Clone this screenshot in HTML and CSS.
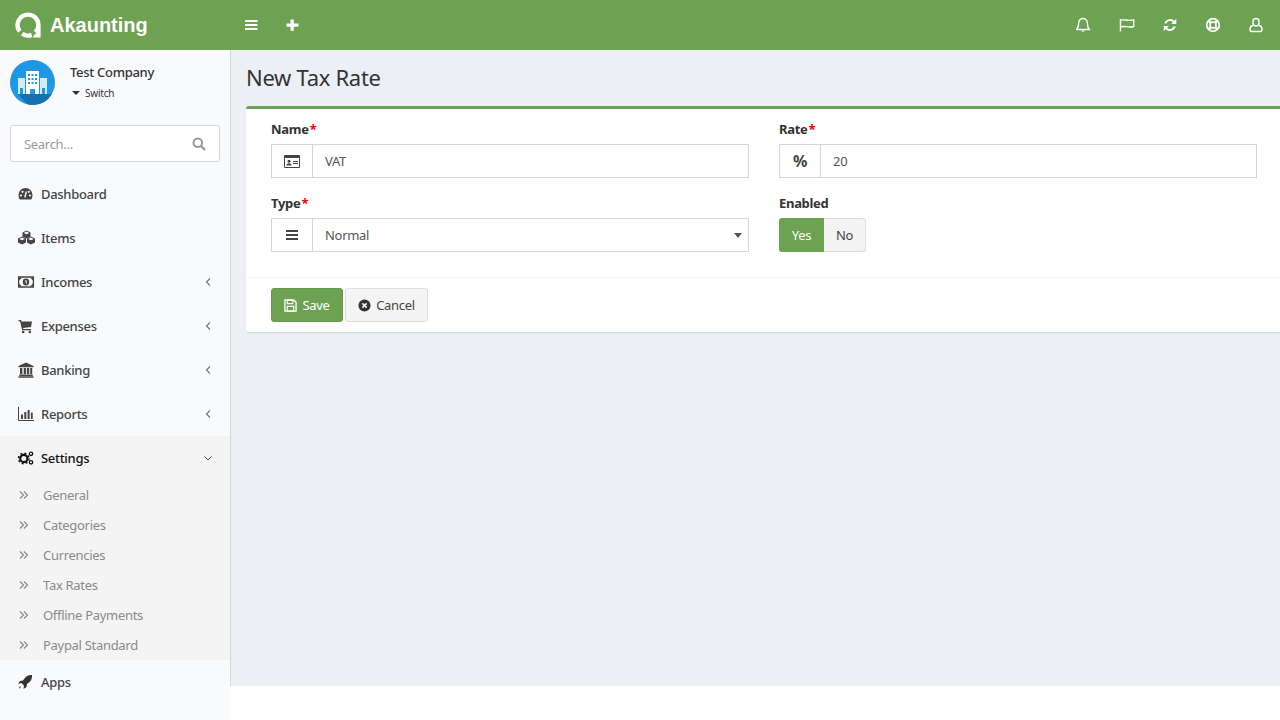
FILE: index.html
```html
<!DOCTYPE html>
<html lang="en">
<head>
    <meta charset="UTF-8">
    <meta name="viewport" content="width=device-width, initial-scale=1.0">
    <title>New Tax Rate</title>
    <link rel="stylesheet" href="styles.css">
</head>
<body>
    <header class="topbar">
        <a class="logo">
            <svg class="logo-mark" viewBox="0 0 26 26" width="26" height="26">
                <path d="M4.700 19.300A10.400 10.400 0 0 1 13 2.600 10.400 10.400 0 0 1 23.400 13a10.400 10.400 0 0 1-3 7.300" fill="none" stroke="#fff" stroke-width="4.400"/>
                <path d="M7.200 21.800a10.400 10.400 0 0 0 9.500 1.100" fill="none" stroke="#fff" stroke-width="4.400"/>
                <path d="M25.600 14V25.500H18l1-2.500 3.200-2.500 1.800-3.500z" fill="#fff"/>
            </svg>
            <span class="logo-text">Akaunting</span>
        </a>
        <div class="topbar-left">
            <svg class="top-icon" viewBox="0 0 14 14" width="14" height="14"><path d="M1 2h12.500v2H1zM1 6h12.500v2H1zM1 10h12.500v2H1z" fill="#fff"/></svg>
            <svg class="top-icon" viewBox="0 0 14 14" width="14" height="14"><path d="M5.500 1.500h3.300V5.500H13.500V8.800H8.800V12.800H5.500V8.800H1.500V5.500H5.500z" fill="#fff"/></svg>
        </div>
        <div class="topbar-right">
            <svg class="top-icon" viewBox="1 0 16 16" width="16" height="16"><path d="M8 1.500a4.300 4.300 0 0 1 4.300 4.300c0 4 .9 5.200 2 6.700H1.700c1.100-1.500 2-2.700 2-6.700A4.300 4.300 0 0 1 8 1.500z" fill="none" stroke="#fff" stroke-width="1.400"/><path d="M6.300 13.500a1.800 1.800 0 0 0 3.400 0z" fill="#fff"/></svg>
            <svg class="top-icon" viewBox="0 0 16 16" width="16" height="16"><path d="M1.500 2V14.500" stroke="#fff" stroke-width="1.500" fill="none"/><path d="M2 3.200c3.500-1.500 6 1.300 12.800-.4v6.700c-6 1.700-9-1.100-12.800.4" fill="none" stroke="#fff" stroke-width="1.300"/></svg>
            <svg class="top-icon" viewBox="0 0 16 16" width="16" height="16"><path d="M2.300 6.500A6 6 0 0 1 12.400 3.700L14.300 1.800V7H9.100l1.900-1.900A4 4 0 0 0 4.500 6.500zM13.700 9.500A6 6 0 0 1 3.600 12.300L1.700 14.200V9h5.200L5 10.900a4 4 0 0 0 6.500-1.400z" fill="#fff"/></svg>
            <svg class="top-icon" viewBox="0 0 16 16" width="16" height="16"><circle cx="8" cy="8" r="6.300" fill="none" stroke="#fff" stroke-width="1.700"/><circle cx="8" cy="8" r="3" fill="none" stroke="#fff" stroke-width="1.500"/><path d="M3.500 3.500l2.500 2.500M12.500 3.500L10 6M3.500 12.500L6 10M12.500 12.500L10 10" stroke="#fff" stroke-width="2.600"/></svg>
            <svg class="top-icon" viewBox="0 0 16 16" width="16" height="16"><path d="M8 1.500a3 3 0 0 1 3 3v1.500a3 3 0 0 1-6 0V4.500a3 3 0 0 1 3-3z" fill="none" stroke="#fff" stroke-width="1.400"/><path d="M5 8.500c-2 .3-3 1.500-3 3.500v1a1.500 1.500 0 0 0 1.500 1.500h9A1.500 1.500 0 0 0 14 13v-1c0-2-1-3.200-3-3.500" fill="none" stroke="#fff" stroke-width="1.400"/></svg>
        </div>
    </header>

    <div class="wrapper">
        <aside class="sidebar">
            <div class="company">
                <svg class="company-pic" viewBox="0 0 45 45" width="45" height="45">
                    <circle cx="22.500" cy="22.500" r="22.500" fill="#1e98e4"/>
                    <path d="M8 34h29l5 0A22.500 22.500 0 0 1 22.500 45 22.500 22.500 0 0 1 17 44z" fill="#1571b2"/>
                    <path d="M8 18h7v16H8zM30 18h7v16h-7z" fill="#d5e9f6"/>
                    <path d="M16 11h13v23H16z" fill="#fff"/>
                    <path d="M18 14h2v2h-2zM21.500 14h2v2h-2zM25 14h2v2h-2zM18 18h2v2h-2zM21.500 18h2v2h-2zM25 18h2v2h-2zM18 22h2v2h-2zM21.500 22h2v2h-2zM25 22h2v2h-2zM20 29h5v5h-5zM10 28h3v6h-3zM32 28h3v6h-3z" fill="#1e98e4"/>
                </svg>
                <div class="company-info">
                    <div class="company-name">Test Company</div>
                    <div class="company-switch"><i class="caret"></i>Switch</div>
                </div>
            </div>
            <div class="search">
                <span>Search...</span>
                <svg viewBox="0 0 14 14" width="14" height="14"><circle cx="5.800" cy="5.800" r="4.300" fill="none" stroke="#999" stroke-width="2"/><path d="M9 9l4 4" stroke="#999" stroke-width="2.400"/></svg>
            </div>
            <nav class="menu">
                <a class="menu-item">
                    <svg viewBox="0 0 16 16" width="16" height="16"><path d="M7.500 2A7 7 0 0 0 .5 9c0 1.800.5 3.300 1.300 4.600h11.400c.8-1.300 1.300-2.800 1.300-4.600a7 7 0 0 0-7-7z" fill="#444"/><path d="M6.800 11.500l1.600-6" stroke="#f9fafc" stroke-width="1.400"/><circle cx="3" cy="9.500" r="1.100" fill="#f9fafc"/><circle cx="4.500" cy="5.800" r="1.100" fill="#f9fafc"/><circle cx="12" cy="9.500" r="1.100" fill="#f9fafc"/><circle cx="10.800" cy="5.800" r="1.100" fill="#f9fafc"/></svg>
                    <span>Dashboard</span>
                </a>
                <a class="menu-item">
                    <svg class="wide-icon" viewBox="0 0 16 16" width="16" height="16">
                        <path d="M8.500.5l4 2v4l-4 2-4-2v-4zM4 6.500l4 2v4l-4 2-4-2v-4zM13 6.500l4 2v4l-4 2-4-2v-4z" fill="#444"/>
                        <path d="M8.500 1.500l2.800 1.400-2.800 1.400-2.800-1.400zM4 7.500l2.800 1.400L4 10.300 1.200 8.900zM13 7.500l2.800 1.400-2.800 1.400-2.800-1.400z" fill="#f9fafc"/>
                    </svg>
                    <span>Items</span>
                </a>
                <a class="menu-item">
                    <svg class="wide-icon" viewBox="0 0 16 16" width="16" height="16"><path d="M.6 3h14.800v10H.6z" fill="none" stroke="#444" stroke-width="1.300"/><ellipse cx="8" cy="8" rx="3.200" ry="3.400" fill="#444"/><path d="M1 3.500h3L1 6.500zM15 3.500h-3l3 3zM1 12.500h3l-3-3zM15 12.500h-3l3-3z" fill="#444"/><path d="M7 6.800h1.300v2.800" stroke="#f9fafc" fill="none"/></svg>
                    <span>Incomes</span>
                    <svg class="chev" viewBox="0 0 8 10" width="8" height="10"><path d="M6 1.500L2.500 5 6 8.500" fill="none" stroke="#777" stroke-width="1.200"/></svg>
                </a>
                <a class="menu-item">
                    <svg viewBox="0 0 16 16" width="16" height="16"><path d="M.5 2h2.600l.4 1.500H14l-1 5.500-8 1 .3 1h7.700v1.300H4.200L2 3.300H.5z" fill="#444"/><circle cx="5.200" cy="14" r="1.300" fill="#444"/><circle cx="11.800" cy="14" r="1.300" fill="#444"/></svg>
                    <span>Expenses</span>
                    <svg class="chev" viewBox="0 0 8 10" width="8" height="10"><path d="M6 1.500L2.500 5 6 8.500" fill="none" stroke="#777" stroke-width="1.200"/></svg>
                </a>
                <a class="menu-item">
                    <svg viewBox="0 0 16 16" width="16" height="16"><path d="M8 .5L15.500 4v1.300H.5V4zM2 6h2.300v6H2zM5.700 6H8v6H5.700zM8.900 6h2.300v6H8.900zM12.200 6h2v6h-2zM1.300 12.500h13.400V14H1.300zM.5 14.300h15v1.400H.5z" fill="#444"/></svg>
                    <span>Banking</span>
                    <svg class="chev" viewBox="0 0 8 10" width="8" height="10"><path d="M6 1.500L2.500 5 6 8.500" fill="none" stroke="#777" stroke-width="1.200"/></svg>
                </a>
                <a class="menu-item">
                    <svg class="wide-icon" viewBox="0 0 16 16" width="16" height="16"><path d="M.5 1v13.500H16" fill="none" stroke="#444" stroke-width="1"/><path d="M3 8.500h2V13H3zM6.300 6h2v7h-2zM9.600 4h2v9h-2zM12.900 6.500h1.800V13h-1.800z" fill="#444"/></svg>
                    <span>Reports</span>
                    <svg class="chev" viewBox="0 0 8 10" width="8" height="10"><path d="M6 1.500L2.500 5 6 8.500" fill="none" stroke="#777" stroke-width="1.200"/></svg>
                </a>
                <div class="menu-group">
                    <a class="menu-item active">
                        <svg class="wide-icon" viewBox="0 0 16 16" width="16" height="16"><circle cx="5.800" cy="8.500" r="3.600" fill="none" stroke="#111" stroke-width="2.200"/><circle cx="5.800" cy="8.500" r="5.300" fill="none" stroke="#111" stroke-width="1.400" stroke-dasharray="2 2.160"/><circle cx="13" cy="3.800" r="1.700" fill="none" stroke="#111" stroke-width="1.300"/><circle cx="13" cy="12.300" r="1.700" fill="none" stroke="#111" stroke-width="1.300"/></svg>
                        <span>Settings</span>
                        <svg class="chev" viewBox="0 0 10 8" width="10" height="8"><path d="M2.500 2.500L6 6l3.500-3.500" fill="none" stroke="#555" stroke-width="1"/></svg>
                    </a>
                    <a class="sub-item"><svg viewBox="0 0 10 10" width="10" height="10"><path d="M1 1.500L4.500 5 1 8.500M5 1.500L8.500 5 5 8.500" fill="none" stroke="#8a8a8a" stroke-width="1.200"/></svg><span>General</span></a>
                    <a class="sub-item"><svg viewBox="0 0 10 10" width="10" height="10"><path d="M1 1.500L4.500 5 1 8.500M5 1.500L8.500 5 5 8.500" fill="none" stroke="#8a8a8a" stroke-width="1.200"/></svg><span>Categories</span></a>
                    <a class="sub-item"><svg viewBox="0 0 10 10" width="10" height="10"><path d="M1 1.500L4.500 5 1 8.500M5 1.500L8.500 5 5 8.500" fill="none" stroke="#8a8a8a" stroke-width="1.200"/></svg><span>Currencies</span></a>
                    <a class="sub-item"><svg viewBox="0 0 10 10" width="10" height="10"><path d="M1 1.500L4.500 5 1 8.500M5 1.500L8.500 5 5 8.500" fill="none" stroke="#8a8a8a" stroke-width="1.200"/></svg><span>Tax Rates</span></a>
                    <a class="sub-item"><svg viewBox="0 0 10 10" width="10" height="10"><path d="M1 1.500L4.500 5 1 8.500M5 1.500L8.500 5 5 8.500" fill="none" stroke="#8a8a8a" stroke-width="1.200"/></svg><span>Offline Payments</span></a>
                    <a class="sub-item"><svg viewBox="0 0 10 10" width="10" height="10"><path d="M1 1.500L4.500 5 1 8.500M5 1.500L8.500 5 5 8.500" fill="none" stroke="#8a8a8a" stroke-width="1.200"/></svg><span>Paypal Standard</span></a>
                </div>
                <a class="menu-item">
                    <svg viewBox="1 0 16 16" width="16" height="16"><path d="M15 1c.3 3.500-1 6.500-5 9l-.5 3-3 2 .5-3.500-2.500-2.500L1 10l2-3 3-.5C8.500 2.500 11.500.700 15 1zM3.500 12.500c-1 .3-1.500 1-1.700 2 1-.2 1.700-.7 2-1.700z" fill="#333"/></svg>
                    <span>Apps</span>
                </a>
            </nav>
        </aside>

        <main class="content">
            <h1 class="page-title">New Tax Rate</h1>
            <section class="box">
                <div class="form-grid">
                    <div class="field">
                        <label>Name <em>*</em></label>
                        <div class="input-group">
                            <span class="addon"><svg viewBox="0 0 16 13" width="16" height="13"><path d="M.5.500h15v12H.5z" fill="none" stroke="#444"/><path d="M1 1h14v2H1z" fill="#444"/><circle cx="5" cy="6.300" r="1.500" fill="#444"/><path d="M2.500 10.500c0-3 5-3 5 0zM9 6h5v1H9zM9 8h5v1H9z" fill="#444"/></svg></span>
                            <span class="value">VAT</span>
                        </div>
                    </div>
                    <div class="field">
                        <label>Rate <em>*</em></label>
                        <div class="input-group">
                            <span class="addon addon-text">%</span>
                            <span class="value">20</span>
                        </div>
                    </div>
                    <div class="field">
                        <label>Type <em>*</em></label>
                        <div class="input-group">
                            <span class="addon"><svg viewBox="0 0 12 12" width="12" height="12"><path d="M0 1h12v2H0zM0 5h12v2H0zM0 9h12v2H0z" fill="#444"/></svg></span>
                            <span class="value select-value">Normal</span>
                            <i class="select-arrow"></i>
                        </div>
                    </div>
                    <div class="field">
                        <label>Enabled</label>
                        <div class="toggle">
                            <span class="toggle-yes">Yes</span>
                            <span class="toggle-no">No</span>
                        </div>
                    </div>
                </div>
                <div class="box-footer">
                    <button class="btn btn-save">
                        <svg viewBox="0 0 14 14" width="13" height="13"><path d="M1 1h9.500L13 3.500V13H1z" fill="none" stroke="#fff" stroke-width="1.400"/><path d="M3.500 1.500h6v3.500h-6zM3.500 8h7v5h-7z" fill="none" stroke="#fff" stroke-width="1.200"/></svg>
                        Save
                    </button>
                    <button class="btn btn-cancel">
                        <svg viewBox="0 0 14 14" width="13" height="13"><circle cx="7" cy="7" r="6.500" fill="#333"/><path d="M4.700 4.700l4.600 4.600M9.300 4.700l-4.600 4.600" stroke="#f4f4f4" stroke-width="1.800"/></svg>
                        Cancel
                    </button>
                </div>
            </section>
        </main>
    </div>
</body>
</html>
```

FILE: styles.css
```css
* {
    box-sizing: border-box;
}
html, body {
    height: 720px;
    overflow: hidden;
}
body {
    margin: 0;
    background: #fff;
    color: #333;
    font-family: "Noto Sans", "Open Sans", sans-serif;
    font-size: 13px;
    letter-spacing: -.3px;
}

/* top bar */
.topbar {
    display: flex;
    align-items: center;
    height: 50px;
    background: #6da252;
    color: #fff;
}
.logo {
    display: flex;
    align-items: center;
    width: 230px;
    padding-left: 15px;
}
.logo-mark {
    margin-right: 9px;
}
.logo-text {
    font-family: "Liberation Sans", sans-serif;
    font-size: 20px;
    font-weight: 700;
    letter-spacing: 0;
}
.topbar-left {
    display: flex;
    align-items: center;
    gap: 27px;
    padding-left: 14px;
}
.topbar-right {
    display: flex;
    align-items: center;
    gap: 27px;
    margin-left: auto;
    padding-right: 16px;
}

/* sidebar */
.wrapper {
    display: flex;
    height: 670px;
}
.sidebar {
    flex: none;
    width: 230px;
    background: #f9fafc;
}
.company {
    display: flex;
    padding: 10px;
    height: 75px;
}
.company-info {
    padding: 3px 0 0 15px;
}
.company-name {
    font-size: 13px;
    font-weight: 500;
    line-height: 18px;
}
.company-switch {
    display: flex;
    align-items: center;
    margin-top: 5px;
    font-size: 10px;
    line-height: 14px;
    letter-spacing: -.2px;
}
.caret {
    width: 0;
    height: 0;
    margin: 0 5px 0 2px;
    border-top: 4px solid #333;
    border-left: 4px solid transparent;
    border-right: 4px solid transparent;
}
.search {
    display: flex;
    align-items: center;
    justify-content: space-between;
    height: 37px;
    margin: 0 10px 10px;
    padding: 0 13px;
    background: #fff;
    border: 1px solid #d2d6de;
    border-radius: 3px;
    color: #999;
}
.menu-item {
    display: flex;
    align-items: center;
    height: 44px;
    padding-left: 18px;
    font-weight: 500;
    color: #444;
}
.menu-item > span {
    margin-left: 7px;
}
.menu-item .chev {
    margin-left: auto;
    margin-right: 18px;
}
.wide-icon {
    overflow: visible;
}
.menu-group {
    background: #f4f4f5;
}
.menu-item.active {
    color: #111;
}
.sub-item {
    display: flex;
    align-items: center;
    height: 30px;
    padding-left: 19px;
    color: #8a8a8a;
}
.sub-item span {
    margin-left: 14px;
}

/* content */
.content {
    flex: 1;
    height: 636px;
    padding-left: 15px;
    background: #ecf0f5;
    border-left: 1px solid #d2d6de;
}
.page-title {
    margin: 0;
    height: 56px;
    padding-top: 11px;
    font-size: 22px;
    font-weight: 400;
    line-height: 32px;
}
.box {
    height: 226px;
    background: #fff;
    border-top: 3px solid #6da252;
    border-radius: 3px 0 0 3px;
    box-shadow: 0 1px 1px rgba(0, 0, 0, .1);
}
.form-grid {
    display: grid;
    grid-template-columns: 478px 478px;
    column-gap: 30px;
    align-content: start;
    height: 169px;
    padding: 11px 25px 0;
    border-bottom: 1px solid #f4f4f4;
}
.field {
    height: 74px;
}
.field label {
    display: block;
    height: 24px;
    font-weight: 700;
    line-height: 19px;
}
.field em {
    margin-left: -2px;
    font-style: normal;
    color: #f00;
}
.input-group {
    display: flex;
    align-items: center;
    height: 34px;
    border: 1px solid #d2d6de;
}
.addon {
    display: flex;
    align-items: center;
    justify-content: center;
    flex: none;
    width: 41px;
    height: 100%;
    border-right: 1px solid #d2d6de;
    color: #444;
}
.addon-text {
    font-size: 16px;
    font-weight: 700;
}
.value {
    flex: 1;
    padding-left: 12px;
    color: #555;
}
.select-arrow {
    width: 0;
    height: 0;
    margin-right: 6px;
    border-top: 5px solid #555;
    border-left: 4px solid transparent;
    border-right: 4px solid transparent;
}
.toggle {
    display: flex;
    height: 34px;
}
.toggle span {
    display: flex;
    align-items: center;
    justify-content: center;
}
.toggle-yes {
    width: 45px;
    background: #6da252;
    color: #fff;
    border-radius: 3px 0 0 3px;
}
.toggle-no {
    width: 42px;
    background: #f4f4f4;
    border: 1px solid #ddd;
    border-left: 0;
    border-radius: 0 3px 3px 0;
    color: #444;
}
.box-footer {
    display: flex;
    gap: 2px;
    padding: 10px 25px;
}
.btn {
    display: flex;
    align-items: center;
    justify-content: center;
    gap: 5px;
    height: 34px;
    padding: 0;
    border-radius: 3px;
    font: inherit;
    letter-spacing: inherit;
}
.btn-save {
    width: 72px;
    background: #6da252;
    border: 1px solid #639a48;
    color: #fff;
}
.btn-cancel {
    width: 83px;
    background: #f4f4f4;
    border: 1px solid #ddd;
    color: #444;
}
```
